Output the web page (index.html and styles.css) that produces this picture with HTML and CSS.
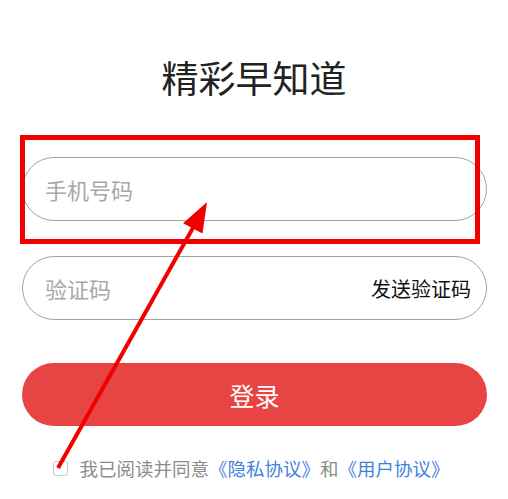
FILE: index.html
```html
<!DOCTYPE html>
<html>
<head>
    <meta charset="utf-8">
    <link rel="stylesheet" href="styles.css">
</head>
<body>
<div class="page">
    <h2 class="title">精彩早知道</h2>
    <form class="login" name="login">
        <div class="field">
            <input type="text" class="text" placeholder="手机号码">
        </div>
        <div class="field">
            <input type="text" class="text" placeholder="验证码">
            <span class="send">发送验证码</span>
        </div>
        <button type="button" class="submit">登录</button>
        <div class="agree">
            <span class="box"></span>
            <span>我已阅读并同意<a class="link">《隐私协议》</a>和<a class="link">《用户协议》</a></span>
        </div>
    </form>

    <!-- annotation drawn over the screenshot -->
    <svg class="mark" width="508" height="499" viewBox="0 0 508 499">
        <rect x="22.5" y="137.5" width="455" height="104" fill="none" stroke="#f20000" stroke-width="5"/>
        <line x1="58" y1="468" x2="194" y2="226" stroke="#f20000" stroke-width="4"/>
        <polygon points="207,202 202.5,233.6 183.1,223.2" fill="#f20000"/>
    </svg>
</div>
</body>
</html>
```

FILE: styles.css
```css
body {
    margin: 0;
    background: #fff;
    font-family: "Noto Sans CJK SC", "Noto Sans", sans-serif;
}
.page {
    position: relative;
    width: 508px;
    height: 499px;
    overflow: hidden;
}
.title {
    margin: 0;
    padding-top: 54px;
    text-align: center;
    font-size: 37px;
    font-weight: 400;
    line-height: 46px;
    color: #222;
}
.login {
    display: flex;
    flex-direction: column;
    padding: 57px 21px 0 22px;
}
.field {
    display: flex;
    align-items: center;
    height: 62px;
    border: 1px solid #a3a3a3;
    border-radius: 32px;
    padding: 0 15px 0 22px;
    margin-bottom: 35px;
}
.field + .field {
    margin-bottom: 43px;
}
input[class="text"] {
    flex: 1;
    min-width: 0;
    border: none;
    outline: none;
    background: transparent;
    padding: 0;
    font-family: inherit;
    font-size: 22px;
    color: #333;
}
input[class="text"]::placeholder {
    color: #a8a8a8;
}
.send {
    font-size: 20px;
    color: #111;
}
.submit {
    height: 63px;
    border: none;
    border-radius: 32px;
    background-color: #e94444;
    color: #fff;
    font-family: inherit;
    font-size: 25px;
    cursor: pointer;
}
.agree {
    display: flex;
    align-items: center;
    justify-content: center;
    gap: 11px;
    margin-top: 29px;
    padding-right: 6px;
    font-size: 18.5px;
    color: #8c8c8c;
}
.agree .box {
    width: 13px;
    height: 13px;
    border: 1px solid #c8c8c8;
    border-radius: 3px;
}
.agree .link {
    color: #3f82dc;
}
.mark {
    position: absolute;
    top: 0;
    left: 0;
}
```
